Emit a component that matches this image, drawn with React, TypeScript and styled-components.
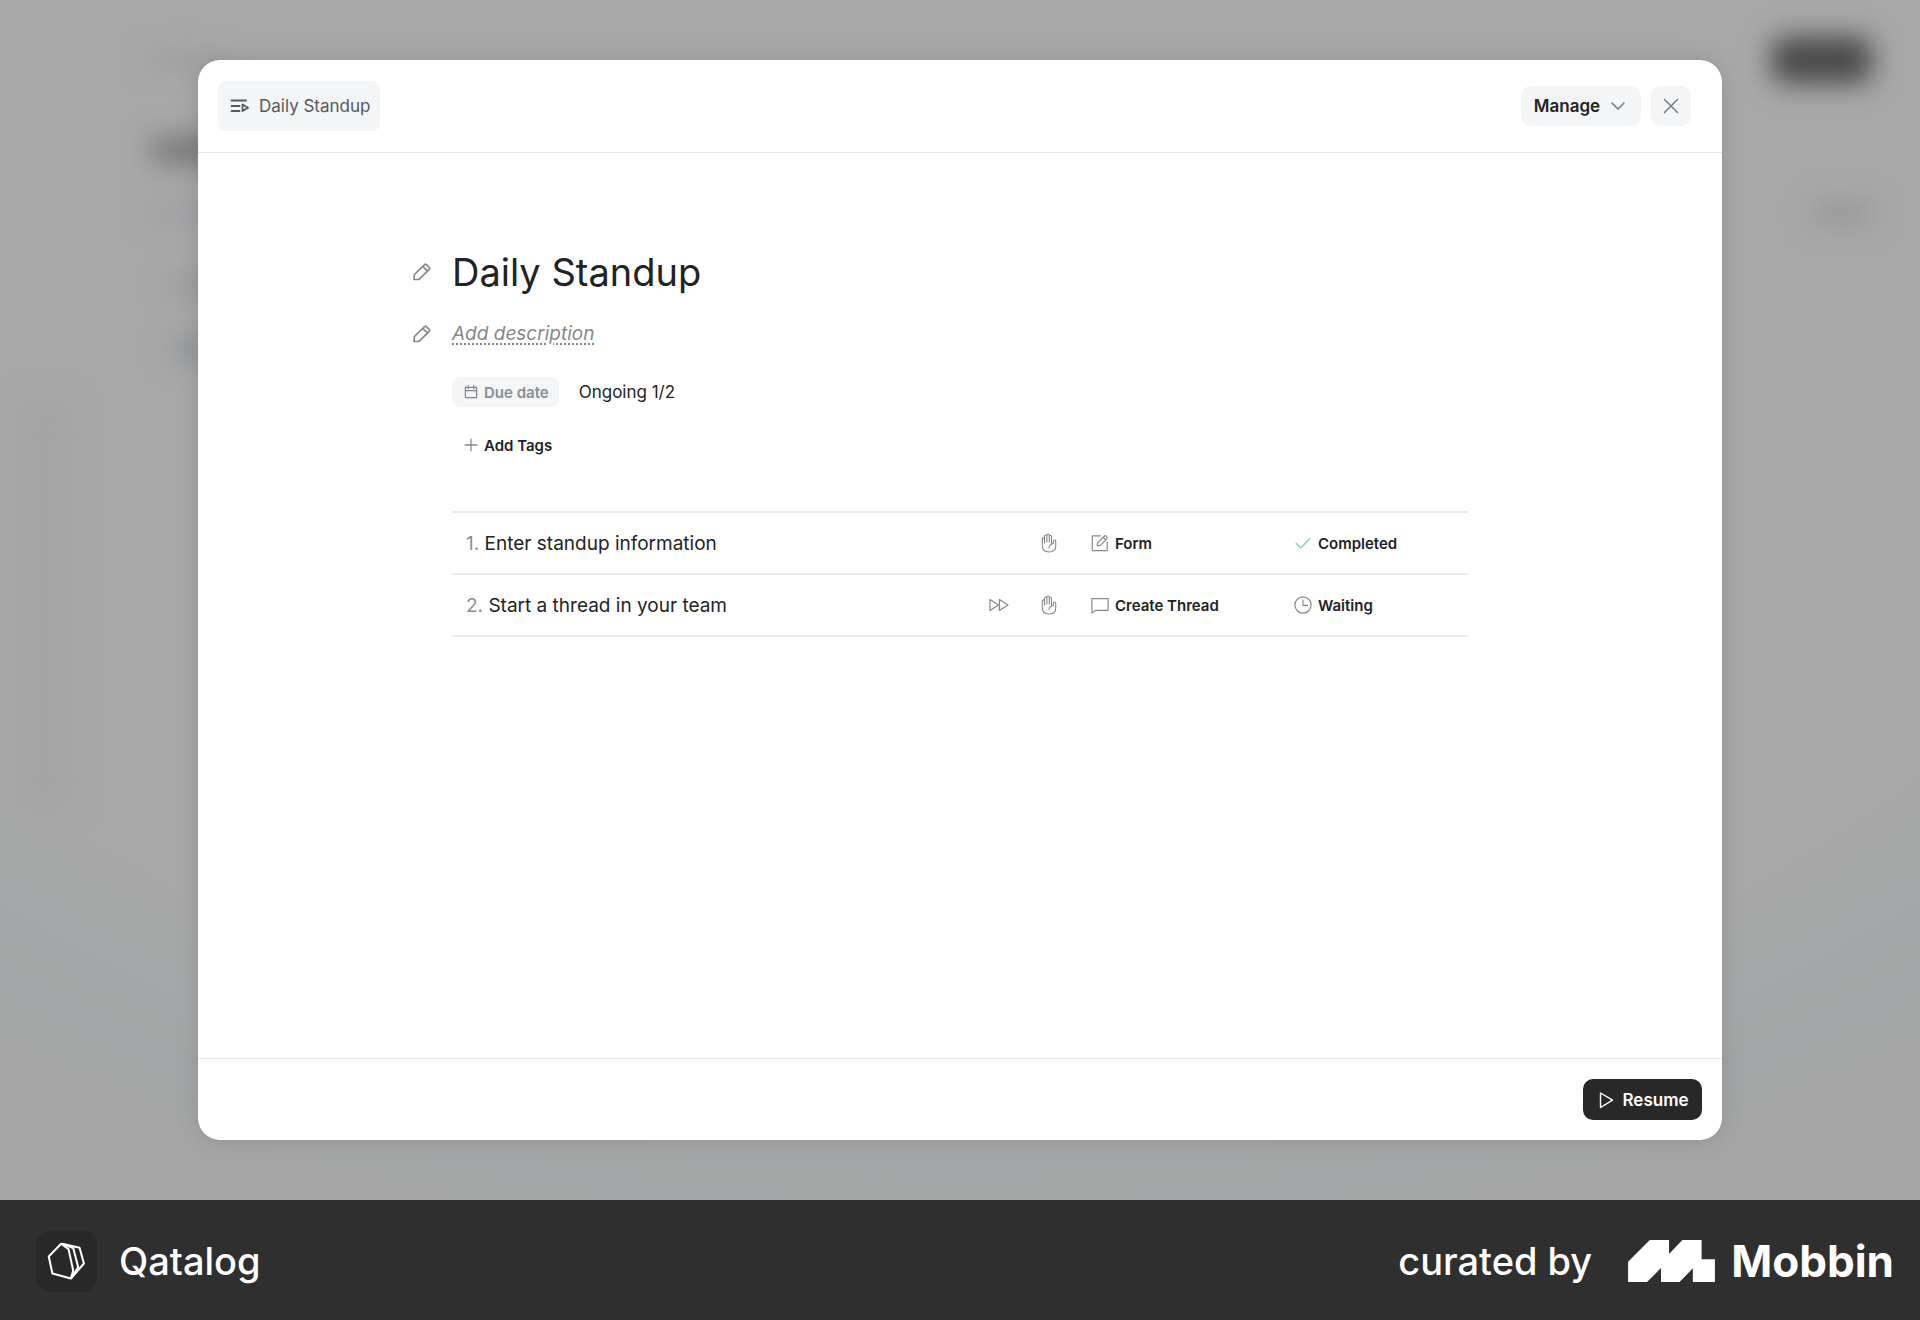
import React from "react";
import styled, { createGlobalStyle } from "styled-components";

const GlobalStyle = createGlobalStyle`
  *, *::before, *::after { box-sizing: border-box; }
  body {
    margin: 0;
    font-family: Inter, "Liberation Sans", sans-serif;
    color: #222324;
    background: #2f2f2f;
  }
  h1, p { margin: 0; }
  button { font: inherit; color: inherit; border: 0; background: none; padding: 0; cursor: pointer; }
`;

/* ---------- shell ---------- */

const Shell = styled.div`
  display: grid;
  grid-template-rows: 1fr auto;
  min-height: 100vh;
`;

const Stage = styled.div`
  position: relative;
  display: flex;
  padding: 60px 198px;
  overflow: hidden;
  background: radial-gradient(ellipse 95% 100% at 50% 20%, #a8a8a8 68%, #a4a6a7 78%, #a5a5a5 86%);
`;

const Backdrop = styled.div`
  position: absolute;
  inset: 0;
  display: flex;
  filter: blur(14px);
`;

const Rail = styled.div`
  width: 150px;
  padding: 400px 78px 0 18px;
`;

const RailBody = styled.div`
  height: 410px;
  border-radius: 16px;
  background: #a4a4a4;
`;

const Ghost = styled.div`
  flex: 1;
  display: grid;
  grid-template-rows: 120px 60px 66px 78px 50px;
  align-items: center;
  padding-right: 48px;
`;

const GhostRow = styled.div<{ $indent?: boolean }>`
  display: flex;
  align-items: center;
  justify-content: space-between;
  padding-left: ${(p) => (p.$indent ? "20px" : "0")};
`;

const Smudge = styled.span<{ $w: number; $h: number; $tone: string }>`
  width: ${(p) => p.$w}px;
  height: ${(p) => p.$h}px;
  border-radius: 12px;
  background: ${(p) => p.$tone};
`;

/* ---------- dialog ---------- */

const Dialog = styled.section`
  position: relative;
  flex: 1;
  display: flex;
  flex-direction: column;
  border-radius: 22px;
  background: #fff;
  box-shadow: 0 0 24px rgba(0, 0, 0, 0.12);
`;

const DialogHeader = styled.header`
  display: flex;
  align-items: center;
  justify-content: space-between;
  padding: 21px 31px 21px 20px;
  border-bottom: 1px solid #e6e8ea;
`;

const Crumb = styled.button`
  display: flex;
  align-items: center;
  gap: 9px;
  height: 50px;
  padding: 0 10px 0 12px;
  border-radius: 8px;
  background: #f3f5f7;
  color: #58595b;
  font-size: 17px;
`;

const HeaderActions = styled.div`
  display: flex;
  gap: 10px;
`;

const SoftButton = styled.button<{ $square?: boolean }>`
  display: flex;
  align-items: center;
  justify-content: center;
  gap: 8px;
  height: 40px;
  width: ${(p) => (p.$square ? "40px" : "120px")};
  border-radius: 10px;
  background: #f3f5f6;
  font-size: 17px;
  font-weight: 600;
  svg { color: #77797b; }
`;

const DialogBody = styled.div`
  flex: 1;
  width: calc(100% * 2 / 3);
  margin: 0 auto;
  padding: 95px 0 40px;
`;

const EditRow = styled.div`
  display: flex;
  align-items: center;
  margin-left: -40px;
`;

const PencilButton = styled.button`
  display: flex;
  width: 40px;
  color: #85888b;
`;

const Title = styled.h1`
  font-size: 38px;
  line-height: 48px;
  font-weight: 400;
`;

const Description = styled.button`
  margin: 24px 0;
  font-size: 19px;
  line-height: 28px;
  font-style: italic;
  color: #85888b;
  text-decoration: underline dotted 2px;
  text-underline-offset: 3px;
`;

const MetaRow = styled.div`
  display: flex;
  align-items: center;
  gap: 20px;
  margin-top: 5px;
  font-size: 17px;
`;

const Chip = styled.button<{ $filled?: boolean }>`
  display: flex;
  align-items: center;
  gap: 6px;
  height: 30px;
  padding: 0 10px 0 12px;
  border-radius: 8px;
  font-size: 15px;
  font-weight: 600;
  background: ${(p) => (p.$filled ? "#f3f5f6" : "transparent")};
  color: ${(p) => (p.$filled ? "#8b8e91" : "#222324")};
  svg { color: #85888b; }
`;

const TagRow = styled.div`
  display: flex;
  margin: 23px 0 51px;
`;

const Steps = styled.table`
  width: 100%;
  table-layout: fixed;
  border-collapse: collapse;
  border-top: 2px solid #ebecee;
`;

const Col = styled.col<{ $w?: number }>`
  width: ${(p) => (p.$w ? `${p.$w}px` : "auto")};
`;

const Cell = styled.td<{ $pad: number }>`
  height: 62px;
  padding: 0 0 0 ${(p) => p.$pad}px;
  border-bottom: 2px solid #ebecee;
  font-size: 19px;
  svg { display: block; color: #85888b; }
`;

const StepNumber = styled.span`
  color: #8b8e91;
`;

const Label = styled.span<{ $done?: boolean }>`
  display: flex;
  align-items: center;
  gap: 6px;
  font-size: 15px;
  font-weight: 600;
  svg { color: ${(p) => (p.$done ? "#7fd3a4" : "#85888b")}; }
`;

const DialogFooter = styled.footer`
  display: flex;
  justify-content: flex-end;
  padding: 20px;
  border-top: 1px solid #e6e8ea;
`;

const PrimaryButton = styled.button`
  display: flex;
  align-items: center;
  justify-content: center;
  gap: 6px;
  width: 119px;
  height: 41px;
  border-radius: 10px;
  background: #282828;
  color: #fff;
  font-size: 17px;
  font-weight: 600;
`;

/* ---------- credit bar ---------- */

const CreditBar = styled.footer`
  display: flex;
  align-items: center;
  justify-content: space-between;
  height: 120px;
  padding: 2px 26px 0 36px;
  background: #2f2f2f;
  color: #fff;
`;

const Brand = styled.div`
  display: flex;
  align-items: center;
  gap: 22px;
  font-size: 38px;
  font-weight: 500;
`;

const BrandTile = styled.span`
  display: flex;
  width: 61px;
  height: 61px;
  border-radius: 14px;
  background: #282828;
`;

const Credit = styled.div`
  display: flex;
  align-items: center;
  gap: 36px;
  font-size: 38px;
  font-weight: 500;
`;

const Mobbin = styled.span`
  display: flex;
  align-items: center;
  gap: 16px;
  font-size: 44px;
  font-weight: 700;
`;

/* ---------- icons ---------- */

type IconProps = { size: number; w?: number; children: React.ReactNode };

const Icon = ({ size, w = 1.5, children }: IconProps) => (
  <svg width={size} height={size} viewBox="0 0 20 20" fill="none" stroke="currentColor"
    strokeWidth={w} strokeLinejoin="round" strokeLinecap="round" aria-hidden="true">
    {children}
  </svg>
);

const FlowIcon = () => (
  <Icon size={20} w={1.8}><path d="M1.5 4.5H16M1.5 10H9.5M1.5 15H9.5M12.5 8.5v6.5l5.5-3.2z" /></Icon>
);
const ChevronIcon = () => <Icon size={20}><path d="M4 7l6 6 6-6" /></Icon>;
const CloseIcon = () => <Icon size={20}><path d="M3.5 3.5l13 13M16.5 3.5l-13 13" /></Icon>;
const PencilIcon = () => (
  <Icon size={20} w={1.7}><path d="M2 17.5l.4-5L12.6 2.6q.9-.8 1.8 0l2.900 2.900q.8.9 0 1.800L7 17.300zM10.800 4.500l4.700 4.700" /></Icon>
);
const CalendarIcon = () => (
  <Icon size={14} w={1.8}><path d="M2 3.5h16v14.5H2zM2 8h16M6 1v4M14 1v4" /></Icon>
);
const PlusIcon = () => <Icon size={14} w={1.8}><path d="M10 1.5v17M1.5 10h17" /></Icon>;
const ForwardIcon = () => (
  <Icon size={20} w={1.2}><path d="M1 4.5v11l8.500-5.500zM10.500 4.500v11L19 10z" /></Icon>
);
const HandIcon = () => (
  <Icon size={20} w={1.1}>
    <path d="M5.500 10V6a1.100 1.100 0 0 0-2.200 0v6.500q0 6.500 6.900 6.500t6.500-6.500V8.200a1.200 1.200 0 0 0-2.400 0v2.300q-4 .6-4.300 4.200" />
    <path d="M5.500 9V3.200a1.200 1.200 0 0 1 2.400 0V9M7.900 8V2.200a1.200 1.200 0 0 1 2.400 0V9M10.300 8V3.400a1.100 1.100 0 0 1 2.200 0V11" />
  </Icon>
);
const FormIcon = () => (
  <Icon size={18} w={1.3}>
    <path d="M10.5 2H1.5v16.5h16.500V9M7 13l.3-3.200L15 2.200q.7-.6 1.400 0l1.500 1.500q.6.7 0 1.400L10.300 12.700zM13.700 3.700l2.800 2.800" />
  </Icon>
);
const ThreadIcon = () => (
  <Icon size={18} w={1.3}><path d="M1 3h18v13H5l-4 3z" /></Icon>
);
const CheckIcon = () => <Icon size={18}><path d="M2.5 10.5l5 5 10-10.500" /></Icon>;
const ClockIcon = () => (
  <Icon size={18} w={1.3}><circle cx="10" cy="10" r="9" /><path d="M10 4.500V10.500h5" /></Icon>
);
const PlayIcon = () => <Icon size={20} w={1.4}><path d="M4.500 3v14.500L16.500 10.200z" /></Icon>;

const QatalogMark = () => (
  <svg width="61" height="61" viewBox="108 120 182 182" fill="none" stroke="#fff" strokeWidth="6" strokeLinejoin="round" aria-hidden="true">
    <path d="M183 158L146 196L157 247L212 262L219 238L205 174Z" />
    <path d="M186 158L219 171L234 228L212 262" />
    <path d="M186 158L238 170L251 217L212 262" />
  </svg>
);

const MobbinMark = () => (
  <svg width="87" height="42" viewBox="0 0 248 120" fill="#fff" aria-hidden="true">
    <path d="M0 62L62 0H117V40L155 0H210V55H248V120H185V81L147 120H94V80L54 120H0Z" />
  </svg>
);

/* ---------- data ---------- */

const steps = [
  { name: "Enter standup information", skip: false, icon: <FormIcon />, type: "Form", done: true, status: "Completed" },
  { name: "Start a thread in your team", skip: true, icon: <ThreadIcon />, type: "Create Thread", done: false, status: "Waiting" },
];

export default function App() {
  return (
    <Shell>
      <GlobalStyle />
      <Stage>
        <Backdrop aria-hidden="true">
          <Rail><RailBody /></Rail>
          <Ghost>
            <GhostRow><Smudge $w={70} $h={12} $tone="#989898" /><Smudge $w={100} $h={46} $tone="#474747" /></GhostRow>
            <GhostRow><Smudge $w={240} $h={24} $tone="#707070" /></GhostRow>
            <GhostRow><Smudge $w={200} $h={14} $tone="#9a9c9f" /><Smudge $w={60} $h={22} $tone="#959595" /></GhostRow>
            <GhostRow $indent><Smudge $w={200} $h={18} $tone="#989898" /></GhostRow>
            <GhostRow $indent><Smudge $w={200} $h={20} $tone="#8d9196" /></GhostRow>
          </Ghost>
        </Backdrop>
        <Dialog role="dialog" aria-label="Daily Standup">
          <DialogHeader>
            <Crumb><FlowIcon />Daily Standup</Crumb>
            <HeaderActions>
              <SoftButton>Manage<ChevronIcon /></SoftButton>
              <SoftButton $square aria-label="Close"><CloseIcon /></SoftButton>
            </HeaderActions>
          </DialogHeader>
          <DialogBody>
            <EditRow>
              <PencilButton aria-label="Edit title"><PencilIcon /></PencilButton>
              <Title>Daily Standup</Title>
            </EditRow>
            <EditRow>
              <PencilButton aria-label="Edit description"><PencilIcon /></PencilButton>
              <Description>Add description</Description>
            </EditRow>
            <MetaRow>
              <Chip $filled><CalendarIcon />Due date</Chip>
              <p>Ongoing 1/2</p>
            </MetaRow>
            <TagRow><Chip><PlusIcon />Add Tags</Chip></TagRow>
            <Steps aria-label="Steps">
              <colgroup><Col /><Col $w={51} /><Col $w={51} /><Col $w={203} /><Col $w={190} /></colgroup>
              <tbody>
                {steps.map((step, i) => (
                  <tr key={step.name}>
                    <Cell $pad={14}><StepNumber>{i + 1}.</StepNumber> {step.name}</Cell>
                    <Cell $pad={16}>{step.skip && <ForwardIcon />}</Cell>
                    <Cell $pad={15}><HandIcon /></Cell>
                    <Cell $pad={16}><Label>{step.icon}{step.type}</Label></Cell>
                    <Cell $pad={16}>
                      <Label $done={step.done}>{step.done ? <CheckIcon /> : <ClockIcon />}{step.status}</Label>
                    </Cell>
                  </tr>
                ))}
              </tbody>
            </Steps>
          </DialogBody>
          <DialogFooter>
            <PrimaryButton><PlayIcon />Resume</PrimaryButton>
          </DialogFooter>
        </Dialog>
      </Stage>
      <CreditBar>
        <Brand><BrandTile><QatalogMark /></BrandTile>Qatalog</Brand>
        <Credit>curated by<Mobbin><MobbinMark />Mobbin</Mobbin></Credit>
      </CreditBar>
    </Shell>
  );
}
